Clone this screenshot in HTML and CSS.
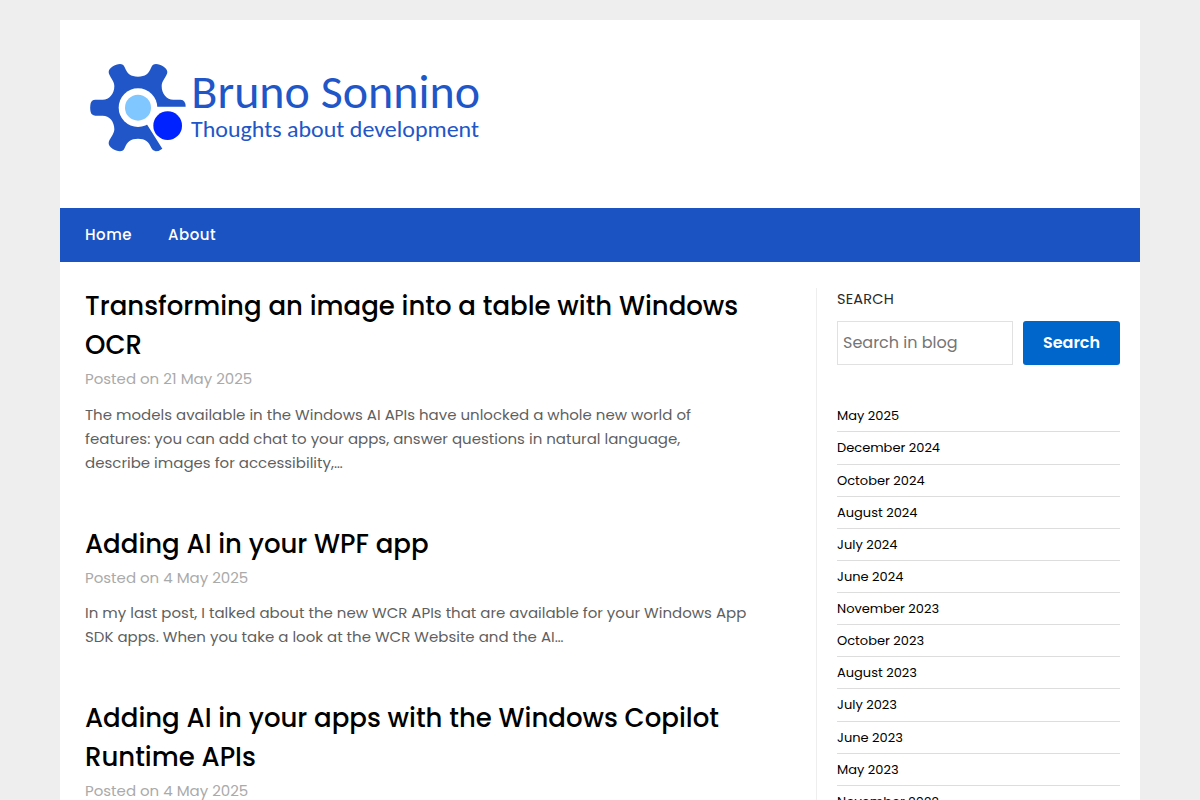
FILE: index.html
```
<!DOCTYPE html>
<html lang="en">
<head>
    <meta charset="UTF-8">
    <meta name="viewport" content="width=device-width, initial-scale=1.0">
    <title>Bruno Sonnino</title>
    <link rel="stylesheet" href="styles.css">
</head>
<body>
    <div class="page">
        <header class="site-header">
            <svg class="logo" viewBox="30 30 1170 300" role="img">
                <path fill="#2156c8" d="M32 160Q34 150 46 149L68 149C88 149 103 132 103 108C103 92 86 78 86 66C86 54 106 43 120 42Q130 42 134 52C142 72 152 80 174 80C196 80 206 72 214 52Q218 42 228 42C242 43 262 54 262 66C262 78 245 92 245 108C245 132 260 149 280 149L302 149Q317 150 317 170L230 170L174 173L202 225L247 296Q237 304 227 304Q218 303 214 294C206 274 196 266 174 266C152 266 142 274 134 294Q130 304 120 304C106 303 86 292 86 280C86 268 103 254 103 238C103 214 88 197 68 197L46 197Q34 196 32 186Q29 173 32 160Z"/>
                <circle cx="174" cy="173" r="58" fill="#fff"/>
                <circle cx="174" cy="173" r="39" fill="#80c6ff"/>
                <circle cx="263" cy="227" r="43" fill="#0022ff"/>
                <text class="logo-name" x="334" y="174" textLength="866" lengthAdjust="spacingAndGlyphs">Bruno Sonnino</text>
                <text class="logo-tagline" x="333" y="261" textLength="864" lengthAdjust="spacingAndGlyphs">Thoughts about development</text>
            </svg>
        </header>
        <nav class="menu">
            <a href="#">Home</a>
            <a href="#">About</a>
        </nav>
        <div class="content">
            <main class="posts">
                <article class="post">
                    <h2>Transforming an image into a table with Windows<br>OCR</h2>
                    <p class="meta">Posted on 21 May 2025</p>
                    <p class="excerpt">The models available in the Windows AI APIs have unlocked a whole new world of<br>features: you can add chat to your apps, answer questions in natural language,<br>describe images for accessibility,…</p>
                </article>
                <article class="post">
                    <h2>Adding AI in your WPF app</h2>
                    <p class="meta">Posted on 4 May 2025</p>
                    <p class="excerpt">In my last post, I talked about the new WCR APIs that are available for your Windows App<br>SDK apps. When you take a look at the WCR Website and the AI…</p>
                </article>
                <article class="post">
                    <h2>Adding AI in your apps with the Windows Copilot<br>Runtime APIs</h2>
                    <p class="meta">Posted on 4 May 2025</p>
                </article>
            </main>
            <aside class="sidebar">
                <p class="search-label">SEARCH</p>
                <form class="search">
                    <input type="text" placeholder="Search in blog">
                    <button type="button">Search</button>
                </form>
                <ul class="archives">
                    <li><a href="#">May 2025</a></li>
                    <li><a href="#">December 2024</a></li>
                    <li><a href="#">October 2024</a></li>
                    <li><a href="#">August 2024</a></li>
                    <li><a href="#">July 2024</a></li>
                    <li><a href="#">June 2024</a></li>
                    <li><a href="#">November 2023</a></li>
                    <li><a href="#">October 2023</a></li>
                    <li><a href="#">August 2023</a></li>
                    <li><a href="#">July 2023</a></li>
                    <li><a href="#">June 2023</a></li>
                    <li><a href="#">May 2023</a></li>
                    <li><a href="#">November 2022</a></li>
                </ul>
            </aside>
        </div>
    </div>
</body>
</html>
```
FILE: styles.css
```
* {
    box-sizing: border-box;
}
body {
    margin: 0;
    height: 800px;
    overflow: hidden;
    background: #eee;
    font-family: Poppins, Inter, sans-serif;
    font-size: 15px;
    color: #5f5f5f;
}
h2, p, ul {
    margin: 0;
    padding: 0;
}
a {
    color: inherit;
    text-decoration: none;
}
.page {
    width: 1080px;
    margin: 20px auto 0;
    background: #fff;
}
.site-header {
    height: 188px;
    padding: 40px 30px;
}
.logo {
    display: block;
    width: 390px;
    height: 100px;
}
.logo text {
    font-family: Carlito, Lato, sans-serif;
    fill: #2156c8;
}
.logo-name {
    font-size: 141px;
}
.logo-tagline {
    font-size: 70px;
}
.menu {
    display: flex;
    gap: 36px;
    height: 54px;
    padding: 0 25px;
    line-height: 53px;
    background: #1b53c2;
    color: #fff;
    font-weight: 500;
    letter-spacing: 0.5px;
}
.content {
    display: flex;
    padding: 24px 20px 0 25px;
}
.posts {
    width: 731px;
    padding-top: 1.3px;
    white-space: nowrap;
}
.post {
    margin-bottom: 49.9px;
}
.post h2 {
    font-size: 26px;
    line-height: 39px;
    font-weight: 500;
    color: #000;
}
.meta {
    margin-top: 2px;
    line-height: 24px;
    color: #aaa;
}
.excerpt {
    margin-top: 11.5px;
    line-height: 24px;
}
.sidebar {
    width: 304px;
    margin-top: 2px;
    padding-left: 20px;
    border-left: 1px solid #eee;
}
.search-label {
    font-size: 14.5px;
    line-height: 22px;
    letter-spacing: 0.2px;
    color: #2a2a2a;
}
.search {
    display: flex;
    gap: 10px;
    margin-top: 11px;
}
.search input {
    width: 176px;
    height: 44px;
    padding: 0 5px 2px;
    border: 1px solid #e1e1e1;
    font: 16px Poppins, Inter, sans-serif;
}
.search input::placeholder {
    color: #757575;
}
.search button {
    width: 97px;
    height: 44px;
    padding: 0 0 2px;
    border: 0;
    border-radius: 3px;
    background: #0066cc;
    color: #fff;
    font: 600 16px Poppins, Inter, sans-serif;
}
.archives {
    margin-top: 35.3px;
    list-style: none;
    font-size: 13px;
    color: #000;
}
.archives li {
    height: 32.125px;
    line-height: 31px;
    border-bottom: 1px solid #ddd;
}
```
